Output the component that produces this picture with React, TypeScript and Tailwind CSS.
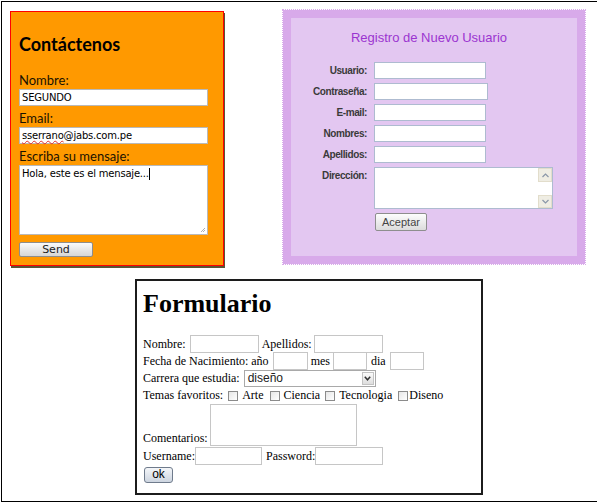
import React from 'react';

const Chevron = ({ up = false }: { up?: boolean }) => (
  <svg width="7" height="5" viewBox="0 0 7 5" className={up ? 'rotate-180' : ''}>
    <path d="M0.5 1 L3.5 4 L6.5 1" fill="none" stroke="#8a96a8" strokeWidth="1.2" />
  </svg>
);

const ContactCard = () => (
  <div className="mt-px w-[214px] h-[255px] border border-[#ff0000] bg-[#ff9900] shadow-[1px_2px_0_#5b5433] pl-[8px] font-['Lato',sans-serif] text-[#1a1200]">
    <h2 className="mt-[21px] text-[18px] leading-[23px] font-bold text-black">Contáctenos</h2>
    <div className="mt-[16px] text-[13px] leading-[16px]">Nombre:</div>
    <div className="mt-px w-[189px] h-[17px] bg-white border border-[#b9b9b9] pl-[2px] text-[10px] leading-[15px] text-black font-['DejaVu_Sans',sans-serif] tracking-[-0.2px]">
      SEGUNDO
    </div>
    <div className="mt-[4px] text-[13px] leading-[16px]">Email:</div>
    <div className="mt-px w-[189px] h-[17px] bg-white border border-[#b9b9b9] pl-[2px] text-[10px] leading-[15px] text-black font-['DejaVu_Sans',sans-serif] tracking-[-0.2px]">
      <span className="underline decoration-wavy decoration-[#e03030] decoration-[1px]">sserrano</span>@jabs.com.pe
    </div>
    <div className="mt-[4px] text-[13px] leading-[16px]">Escriba su mensaje:</div>
    <div className="relative mt-px w-[189px] h-[70px] bg-white border border-[#b9b9b9] pl-[2px] pt-[1px] text-[10px] leading-[14px] text-black font-['DejaVu_Sans',sans-serif] tracking-[-0.2px]">
      Hola, este es el mensaje...<span className="inline-block w-px h-[12px] bg-black align-middle" />
      <svg width="6" height="6" viewBox="0 0 6 6" className="absolute right-px bottom-px">
        <path d="M5 1 L1 5 M5 3 L3 5" stroke="#9a9a9a" strokeWidth="0.8" />
      </svg>
    </div>
    <button
      type="button"
      className="mt-[5px] w-[74px] h-[15px] rounded-[2px] border border-[#8d8d8d] bg-gradient-to-b from-[#fafafa] to-[#d6d6d6] text-[11px] leading-[13px] text-[#222] font-['DejaVu_Sans',sans-serif]"
    >
      Send
    </button>
  </div>
);

const regRows: { label: string; w: string }[] = [
  { label: 'Usuario:', w: 'w-[112px]' },
  { label: 'Contraseña:', w: 'w-[114px]' },
  { label: 'E-mail:', w: 'w-[112px]' },
  { label: 'Nombres:', w: 'w-[112px]' },
  { label: 'Apellidos:', w: 'w-[112px]' },
];

const RegisterCard = () => (
  <div className="ml-[59px] w-[302px] h-[254px] border-[8px] border-[#d8aaea] outline-1 outline-dotted outline-[#d8aaea] bg-[#e3c7f1] font-['Liberation_Sans',Arial,sans-serif]">
    <h2 className="mt-[12px] pr-[10px] text-center text-[13px] leading-[15px] text-[#9b35d0]">Registro de Nuevo Usuario</h2>
    <div className="mt-[17px] flex flex-col gap-[4px]">
      {regRows.map((r) => (
        <div key={r.label} className="flex items-start gap-[7px]">
          <span className="w-[76px] text-right text-[10px] leading-[17px] font-bold tracking-[-0.4px] text-[#3a3a3a]">{r.label}</span>
          <span className={`${r.w} h-[17px] bg-white border border-[#aebbd0]`} />
        </div>
      ))}
      <div className="flex items-start gap-[7px]">
        <span className="w-[76px] text-right text-[10px] leading-[17px] font-bold tracking-[-0.4px] text-[#3a3a3a]">Dirección:</span>
        <span className="w-[179px] h-[42px] bg-white border border-[#aebbd0] flex justify-end">
          <span className="w-[14px] flex flex-col">
            <span className="h-[14px] bg-[#efede3] border border-[#e2ddcb] flex items-center justify-center">
              <Chevron up />
            </span>
            <span className="flex-1 bg-white" />
            <span className="h-[13px] bg-[#efede3] border border-[#e2ddcb] flex items-center justify-center">
              <Chevron />
            </span>
          </span>
        </span>
      </div>
    </div>
    <button
      type="button"
      className="ml-[84px] mt-[4px] w-[52px] h-[18px] rounded-[2px] border border-[#8e8e8e] bg-gradient-to-b from-[#fdfdfd] to-[#dcdcdc] text-[11px] leading-[14px] text-[#444]"
    >
      Aceptar
    </button>
  </div>
);

const Box = ({ w }: { w: string }) => <span className={`${w} h-[18px] bg-white border border-[#c6c6c6]`} />;
const Check = () => <span className="w-[10px] h-[10px] border border-[#8b8b8b] bg-gradient-to-br from-[#e6e6e6] to-white" />;

const PlainForm = () => (
  <div className="ml-[133px] mt-[2px] w-[348px] h-[216px] border-2 border-[#1c1c1c] bg-white pl-[6px] font-['Liberation_Serif','Times_New_Roman',serif] text-[12px] text-black">
    <h1 className="mt-[8px] text-[26px] leading-[30px] font-bold">Formulario</h1>
    <div className="mt-[16px] flex items-center h-[18px] leading-[18px]">
      <span>Nombre:</span>
      <span className="ml-[4px] flex"><Box w="w-[69px]" /></span>
      <span className="ml-[3px]">Apellidos:</span>
      <span className="ml-[2px] flex"><Box w="w-[69px]" /></span>
    </div>
    <div className="-mt-px flex items-center h-[18px] leading-[18px]">
      <span>Fecha de Nacimiento: año</span>
      <span className="ml-[4px] flex"><Box w="w-[35px]" /></span>
      <span className="ml-[3px]">mes</span>
      <span className="ml-[3px] flex"><Box w="w-[34px]" /></span>
      <span className="ml-[4px]">dia</span>
      <span className="ml-[4px] flex"><Box w="w-[34px]" /></span>
    </div>
    <div className="flex items-center h-[17px] leading-[17px]">
      <span>Carrera que estudia:</span>
      <span className="ml-[4px] w-[132px] h-[17px] border border-[#a9a9a9] bg-white flex items-center justify-between pl-[3px] pr-px">
        <span className="font-['Liberation_Sans',Arial,sans-serif] text-[12px] leading-[15px] text-[#222]">diseño</span>
        <span className="w-[12px] h-[13px] border border-[#c3c3c3] bg-gradient-to-b from-[#fbfbfb] to-[#dedede] flex items-center justify-center">
          <svg width="7" height="5" viewBox="0 0 7 5">
            <path d="M0.8 0.8 L3.5 3.8 L6.2 0.8" fill="none" stroke="#333" strokeWidth="1.5" />
          </svg>
        </span>
      </span>
    </div>
    <div className="flex items-center h-[17px] leading-[17px]">
      <span>Temas favoritos:</span>
      <span className="ml-[5px] flex"><Check /></span>
      <span className="ml-[4px]">Arte</span>
      <span className="ml-[7px] flex"><Check /></span>
      <span className="ml-[3px]">Ciencia</span>
      <span className="ml-[5px] flex"><Check /></span>
      <span className="ml-[4px]">Tecnologia</span>
      <span className="ml-[6px] flex"><Check /></span>
      <span className="ml-px">Diseno</span>
    </div>
    <div className="flex items-end h-[42px]">
      <span className="leading-[15px]">Comentarios:</span>
      <span className="ml-[2px] w-[147px] h-[42px] bg-white border border-[#c6c6c6]" />
    </div>
    <div className="mt-px flex items-center h-[18px] leading-[18px]">
      <span>Username:</span>
      <span className="flex"><Box w="w-[67px]" /></span>
      <span className="ml-[4px]">Password:</span>
      <span className="flex"><Box w="w-[68px]" /></span>
    </div>
    <button
      type="button"
      className="mt-[1px] ml-px w-[29px] h-[16px] rounded-[3px] border border-[#6f7b8c] bg-gradient-to-b from-[#f4f6f9] to-[#cdd5e0] font-['Liberation_Sans',Arial,sans-serif] text-[12px] leading-[13px] text-black"
    >
      ok
    </button>
  </div>
);

export default function App() {
  return (
    <div className="w-[597px] h-[503px] bg-white overflow-hidden">
      <div className="ml-px mt-px w-[600px] h-[501px] border-l border-t border-b border-black">
        <div className="h-[275px] pl-[8px] pt-[8px] flex items-start">
          <ContactCard />
          <RegisterCard />
        </div>
        <PlainForm />
      </div>
    </div>
  );
}
